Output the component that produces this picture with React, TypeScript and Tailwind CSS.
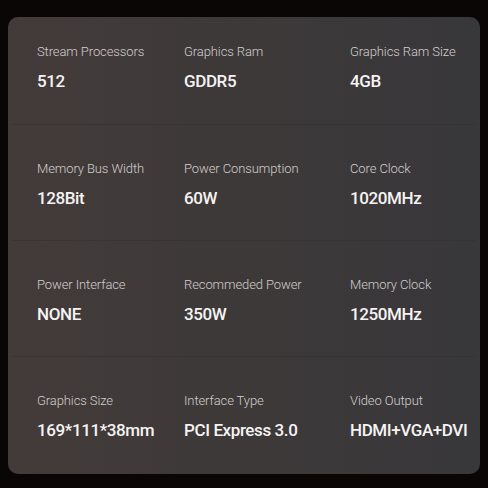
import React from "react";

type Spec = { label: string; value: string };

const rows: Spec[][] = [
  [
    { label: "Stream Processors", value: "512" },
    { label: "Graphics Ram", value: "GDDR5" },
    { label: "Graphics Ram Size", value: "4GB" },
  ],
  [
    { label: "Memory Bus Width", value: "128Bit" },
    { label: "Power Consumption", value: "60W" },
    { label: "Core Clock", value: "1020MHz" },
  ],
  [
    { label: "Power Interface", value: "NONE" },
    { label: "Recommeded Power", value: "350W" },
    { label: "Memory Clock", value: "1250MHz" },
  ],
  [
    { label: "Graphics Size", value: "169*111*38mm" },
    { label: "Interface Type", value: "PCI Express 3.0" },
    { label: "Video Output", value: "HDMI+VGA+DVI" },
  ],
];

const SpecCell: React.FC<Spec> = ({ label, value }) => (
  <div className="flex flex-col">
    <span className="text-[13px] leading-4 text-[#d2cecc] font-light tracking-[-0.1px] [font-family:Roboto,'Liberation_Sans',sans-serif]">
      {label}
    </span>
    <span className="mt-[10px] text-[17px] leading-[22px] text-[#f6f4f3] font-medium tracking-[-0.4px] [font-family:Roboto,'Open_Sans',sans-serif]">
      {value}
    </span>
  </div>
);

export default function App() {
  return (
    <div className="w-[488px] h-[488px] bg-[#0b0606] pt-[17px] px-2">
      <div className="w-[472px] h-[457px] rounded-[10px] bg-gradient-to-r from-[#433b3a] via-[#3d3939] to-[#38373a] overflow-hidden">
        {rows.map((row, i) => (
          <div key={i} className="flex flex-col">
            <div
              className={
                i === 0
                  ? "h-[107px] pt-[27px] pl-[29px] grid grid-cols-[147px_166px_1fr]"
                  : "h-[115px] pt-[36px] pl-[29px] grid grid-cols-[147px_166px_1fr]"
              }
            >
              {row.map((s) => (
                <SpecCell key={s.label} {...s} />
              ))}
            </div>
            {i < 3 && <div className="mx-1 h-px bg-[#322d2d]/40" />}
          </div>
        ))}
      </div>
    </div>
  );
}
